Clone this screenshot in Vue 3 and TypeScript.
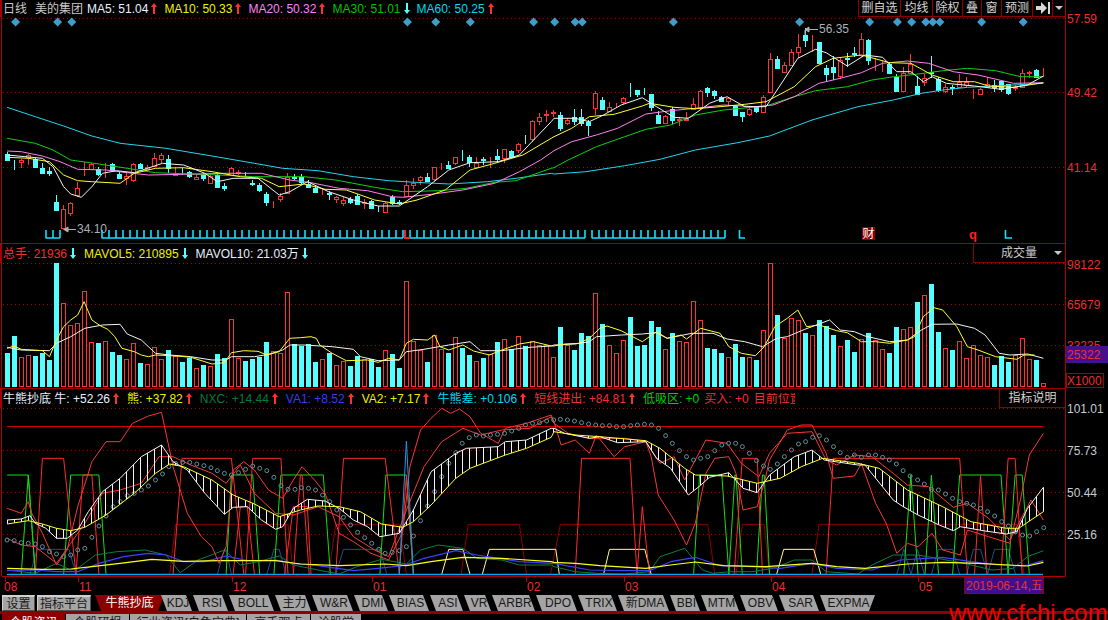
<script setup lang="ts">
type P = [number, number]
type Arrow = 'up' | 'down' | null
interface Item { text: string; cls: string; arrow: Arrow }

const SX = 2.83
const toReal = (a: P[], b: P[], yo: number): string =>
  [...a.map(([x, y]): P => [x / SX, yo + y / 3]), ...b.map(([x, y]): P => [554 + x / SX, yo + y / 3])]
    .map(([x, y]) => `${x.toFixed(1)},${y.toFixed(1)}`)
    .join(' ')
const toPts = (a: P[], b: P[], yo: number): P[] =>
  [...a.map(([x, y]): P => [x / SX, yo + y / 3]), ...b.map(([x, y]): P => [554 + x / SX, yo + y / 3])]

const interp = (pts: P[], x: number): number => {
  for (let i = 1; i < pts.length; i++) {
    if (x <= pts[i][0]) {
      const [x0, y0] = pts[i - 1]
      const [x1, y1] = pts[i]
      return y0 + ((y1 - y0) * (x - x0)) / Math.max(x1 - x0, 0.01)
    }
  }
  return pts[pts.length - 1][1]
}

/* ---------- header rows ---------- */
const mainItems: Item[] = [
  { text: 'MA5: 51.04', cls: 'c-white', arrow: 'up' },
  { text: 'MA10: 50.33', cls: 'c-yellow', arrow: 'up' },
  { text: 'MA20: 50.32', cls: 'c-pink', arrow: 'up' },
  { text: 'MA30: 51.01', cls: 'c-green', arrow: 'down' },
  { text: 'MA60: 50.25', cls: 'c-cyan', arrow: 'up' },
]
const volItems: Item[] = [
  { text: '总手: 21936', cls: 'c-red', arrow: 'down' },
  { text: 'MAVOL5: 210895', cls: 'c-yellow', arrow: 'down' },
  { text: 'MAVOL10: 21.03万', cls: 'c-white', arrow: 'down' },
]
const indItems: Item[] = [
  { text: '牛熊抄底 牛: +52.26', cls: 'c-white', arrow: 'up' },
  { text: '熊: +37.82', cls: 'c-yellow', arrow: 'up' },
  { text: 'NXC: +14.44', cls: 'c-dgreen', arrow: 'up' },
  { text: 'VA1: +8.52', cls: 'c-blue', arrow: 'up' },
  { text: 'VA2: +7.17', cls: 'c-yellow', arrow: 'up' },
  { text: '牛熊差: +0.106', cls: 'c-cyan', arrow: 'up' },
  { text: '短线进出: +84.81', cls: 'c-red', arrow: 'up' },
  { text: '低吸区: +0', cls: 'c-lime tight', arrow: null },
  { text: '买入: +0', cls: 'c-red tight', arrow: null },
]
const tools = [
  { t: '删自选', w: 42 }, { t: '均线', w: 32 }, { t: '除权', w: 30 }, { t: '叠', w: 19 },
  { t: '窗', w: 20 }, { t: '预测', w: 31 },
]

/* ---------- candles: red?, bodyTop, bodyBottom, high, low (zoom y = 3x) ---------- */
const candleRaw: number[][] = [
  [0,462,480,455,480],[0,480,481,480,510],[1,480,486,478,503],[1,466,472,462,495],[0,478,500,475,500],
  [0,503,518,490,518],[0,512,518,500,528],[0,605,630,585,630],[1,628,685,615,690],[1,608,638,605,648],
  [1,565,585,545,590],[1,497,498,485,528],[1,493,507,490,510],[0,508,522,500,528],[1,510,511,490,535],
  [0,493,510,490,514],[0,522,535,515,538],[1,527,535,520,555],[1,492,540,490,545],[0,492,505,490,505],
  [1,500,508,495,510],[1,475,498,460,500],[1,465,476,460,490],[0,478,505,465,520],[1,520,525,500,525],
  [0,510,511,505,525],[0,517,528,512,533],[1,530,537,525,540],[0,525,535,520,542],[1,528,548,525,550],
  [0,525,560,520,565],[0,557,565,550,572],[1,505,525,502,528],[1,515,520,510,525],[0,521,522,515,530],
  [0,550,551,540,558],[0,555,570,548,575],[0,582,605,575,617],[1,605,606,603,623],[1,588,597,580,605],
  [1,530,580,520,582],[0,532,533,522,540],[0,530,545,522,552],[0,553,560,540,563],[0,565,575,555,578],
  [1,570,571,565,585],[0,580,581,572,600],[1,590,596,588,608],[1,601,608,590,618],[0,596,606,590,612],
  [0,587,613,582,615],[1,607,608,598,628],[0,604,624,600,628],[0,630,631,618,636],[1,610,635,605,640],
  [0,590,610,585,615],[0,607,608,600,615],[1,556,587,540,590],[1,548,555,535,568],[1,532,540,528,555],
  [0,531,543,518,545],[1,502,538,500,542],[1,495,496,490,510],[0,495,503,482,506],[1,472,488,470,495],
  [0,468,469,450,482],[0,470,487,465,500],[1,490,500,472,505],[0,478,479,470,495],[1,477,478,470,505],
  [0,468,478,448,485],[1,448,475,447,490],[0,453,470,450,472],[1,432,450,428,460],[0,408,409,405,432],
  [1,364,418,360,425],[1,351,362,338,375],[1,343,344,330,365],[1,335,340,330,350],
  [0,345,385,335,392],[1,360,368,355,375],[0,352,362,328,375],[0,352,370,328,378],[0,365,375,360,408],
  [1,280,325,273,345],[0,300,327,292,330],[1,322,333,305,337],[1,317,318,310,325],[1,295,305,292,312],
  [0,282,283,250,292],[0,271,282,270,290],[0,275,276,265,285],[0,282,320,282,333],[0,345,370,332,372],
  [1,348,368,345,370],[0,328,360,322,372],[1,358,359,350,378],[1,358,359,335,360],[1,312,328,295,330],
  [1,273,325,270,328],[0,265,275,262,290],[0,273,285,270,298],[0,292,303,288,305],[1,294,302,290,315],
  [0,318,345,315,348],[0,337,347,335,366],[1,327,342,322,348],[0,322,332,318,340],[1,292,335,285,338],
  [1,178,275,160,278],[0,178,205,168,208],[1,195,215,185,218],[1,157,195,147,197],[1,142,155,102,175],
  [0,105,120,85,140],[1,128,129,105,155],[0,127,190,125,192],[0,205,222,195,243],[0,202,216,168,240],
  [1,180,228,175,238],[0,175,176,160,200],[0,160,161,140,170],[1,118,165,100,172],[0,120,180,118,195],
  [1,180,181,175,212],[1,185,186,182,215],[0,192,218,188,220],[0,230,273,222,275],[1,220,272,200,275],
  [1,192,218,162,222],[0,258,283,228,285],[1,235,245,222,258],[0,217,218,168,235],[0,238,270,232,275],
  [1,262,273,252,280],[0,262,263,255,285],[1,247,260,222,262],[1,245,255,232,262],[1,270,271,268,298],
  [1,267,282,265,285],[1,253,260,230,262],[0,255,260,240,275],[0,243,268,240,275],[0,253,280,252,285],
  [1,262,263,255,272],[1,218,262,208,265],[1,217,218,212,235],[0,210,232,208,235],[1,218,219,205,230],
]
const barX = (i: number) => 7 + 7 * i
const candles = candleRaw.map((c, i) => {
  const x = barX(i)
  const top = Math.round(c[1] / 3)
  const bot = Math.round(c[2] / 3)
  return {
    red: c[0] === 1,
    cx: x + 0.5,
    x: x - 2 + 0.5,
    top: top + 0.5,
    h: Math.max(bot - top, 0),
    wick: `M${x + 0.5} ${Math.round(c[3] / 3)}V${top}M${x + 0.5} ${bot}V${Math.round(c[4] / 3)}`,
  }
})

/* ---------- main moving averages ---------- */
const maLines = [
  { cls: 'l-cyan', pts: toReal(
    [[20,322],[100,350],[180,378],[260,408],[340,430],[470,445],[600,468],[720,490],[800,505],[900,512],[1000,530],[1100,542],[1160,546],[1270,552],[1380,545],[1460,535],[1560,520]],
    [[0,522],[90,515],[200,497],[300,478],[400,450],[520,428],[610,408],[730,360],[860,320],[960,300],[1040,280],[1100,270],[1170,262],[1250,258],[1385,250]], 0) },
  { cls: 'l-green', pts: toReal(
    [[20,415],[100,430],[150,450],[200,480],[280,492],[360,505],[440,518],[540,522],[620,525],[720,530],[860,530],[950,540],[1060,562],[1140,575],[1240,572],[1320,565],[1400,547],[1460,542],[1520,520],[1560,505]],
    [[0,503],[40,480],[120,440],[200,410],[260,388],[330,375],[400,345],[480,330],[600,318],[680,290],[740,272],[830,260],[900,240],[950,232],[1030,222],[1100,212],[1170,205],[1250,212],[1320,230],[1385,230]], 0) },
  { cls: 'l-pink', pts: toReal(
    [[20,453],[60,455],[120,468],[170,485],[220,508],[300,510],[360,518],[420,525],[520,523],[640,520],[740,520],[820,540],[880,548],[960,565],[1040,572],[1110,590],[1140,592],[1220,583],[1310,570],[1400,550],[1470,515],[1530,480]],
    [[0,452],[50,425],[120,405],[180,385],[260,342],[330,332],[400,325],[480,315],[570,320],[620,315],[680,290],[750,250],[810,235],[870,218],[930,190],[1000,183],[1060,190],[1130,215],[1200,225],[1300,250],[1385,248]], 0) },
  { cls: 'l-yellow', pts: toReal(
    [[20,472],[80,475],[140,485],[180,525],[220,542],[260,545],[340,550],[380,520],[440,505],[520,503],[600,515],[680,530],[740,535],[790,560],[860,552],[920,568],[980,570],[1060,600],[1130,612],[1180,600],[1260,570],[1330,510],[1400,490],[1480,465],[1560,415]],
    [[0,410],[50,385],[100,350],[170,343],[250,318],[270,310],[340,322],[400,326],[470,320],[540,313],[600,305],[680,260],[740,200],[790,175],[870,165],[950,188],[1010,190],[1070,225],[1130,245],[1190,245],[1230,258],[1300,262],[1385,248]], 0) },
  { cls: 'l-white', pts: toReal(
    [[20,465],[120,475],[150,500],[180,560],[200,582],[230,592],[260,560],[290,520],[330,512],[380,518],[460,490],[520,495],[580,520],[615,545],[660,535],[730,535],[790,585],[820,575],[870,545],[930,575],[1000,600],[1070,618],[1130,618],[1210,560],[1270,510],[1330,488],[1410,485],[1470,465],[1510,420],[1560,365]],
    [[0,355],[60,355],[100,365],[140,345],[190,315],[250,293],[290,320],[340,352],[380,355],[440,310],[490,290],[540,320],[600,320],[650,240],[690,175],[740,148],[770,158],[830,198],[880,165],[930,172],[970,215],[1010,215],[1045,245],[1070,230],[1110,250],[1190,258],[1265,268],[1340,255],[1385,228]], 0) },
]

const diamondXs = [44,163,203,1153,1233,1331,1510].map(x => x / SX)
  .concat([2,60,80,338,695,893,972,1012,1052,1072,1092,1210,1328].map(x => 554 + x / SX))
const diamonds = diamondXs.map(x => `${x},17.5 ${x + 4.5},22 ${x},26.5 ${x - 4.5},22`)

const combRange = (a: number, b: number) => {
  let d = `M${a - 0.5} 238H${b}`
  for (let x = a; x <= b; x += 7) d += `M${x} 238V230`
  return d
}
const combPath = combRange(46, 60) + combRange(102, 403) + combRange(410, 585) + combRange(592, 725)
  + 'M739.5 230V238H745M1005.5 230V238H1012'

/* ---------- volume ---------- */
const volRaw: number[][] = [
  [0,340],[0,288],[1,352],[1,346],[0,348],[0,338],[0,360],[0,70],[1,190],[1,256],[1,250],[1,154],[1,307],[0,309],[1,303],[0,336],[0,345],[1,358],[1,310],[0,369],
  [1,373],[1,322],[1,358],[0,330],[1,349],[0,366],[0,353],[1,385],[0,375],[1,378],[0,342],[0,355],[1,238],[1,353],[0,363],[0,357],[0,350],[0,306],[1,334],[1,338],
  [1,157],[0,312],[0,319],[0,312],[0,366],[1,358],[0,338],[1,375],[1,364],[0,378],[0,348],[1,357],[0,358],[0,380],[1,330],[0,342],[0,384],[1,124],[1,303],[1,331],
  [0,366],[1,285],[1,327],[0,339],[1,292],[0,324],[0,345],[1,364],[0,354],[1,342],[0,306],[1,298],[0,328],[1,288],[0,318],[1,304],[1,315],[1,316],[1,352],
  [0,261],[1,314],[0,330],[0,279],[0,288],[1,160],[0,252],[1,316],[1,340],[1,300],[0,231],[0,318],[0,315],[0,243],[0,261],[1,328],[0,279],[1,303],[1,306],[1,184],
  [1,241],[0,324],[0,327],[0,339],[1,351],[0,312],[0,351],[1,352],[0,360],[1,270],[1,70],[0,225],[1,295],[1,235],[1,241],[0,279],[1,286],[0,240],[0,258],[0,285],
  [1,318],[0,300],[0,336],[1,298],[0,279],[1,300],[1,328],[0,339],[0,261],[1,267],[1,261],[0,186],[1,165],[0,132],[0,276],[1,324],[0,330],[1,304],[1,354],[1,316],
  [1,346],[1,351],[0,375],[0,348],[0,366],[1,346],[1,295],[1,357],[0,360],[1,430],
]
const vols = volRaw.map((v, i) => {
  const top = 240 + Math.round(v[1] / 3)
  return { red: v[0] === 1, x: barX(i) - 2 + 0.5, y: top + 0.5, h: 387 - top - 1 }
})
const volYellow = toReal(
  [[20,325],[40,318],[60,328],[120,332],[140,350],[160,300],[180,260],[200,240],[220,225],[238,185],[260,240],[285,258],[305,268],[325,290],[345,325],[380,335],[400,345],[420,350],[440,345],[500,348],[540,352],[600,372],[635,368],[655,338],[690,332],[730,334],[755,345],[790,335],[820,295],[850,293],[880,290],[895,295],[905,315],[940,340],[980,362],[1040,360],[1070,367],[1100,355],[1130,360],[1150,310],[1170,298],[1210,300],[1230,285],[1245,320],[1270,330],[1310,315],[1340,333],[1385,345],[1420,330],[1470,312],[1510,305],[1560,318]],
  [[0,318],[30,312],[70,310],[100,295],[130,265],[150,258],[190,272],[250,305],[290,275],[320,295],[360,285],[375,297],[415,265],[470,280],[495,320],[530,340],[570,347],[595,320],[625,260],[660,235],[690,210],[715,260],[750,255],[800,272],[830,278],[870,305],[910,305],[950,310],[1000,300],[1020,290],[1045,230],[1075,203],[1100,210],[1140,260],[1170,320],[1200,330],[1250,350],[1310,358],[1330,345],[1360,345]], 240)
const volWhite = toReal(
  [[20,322],[60,330],[140,332],[160,310],[200,290],[240,265],[290,255],[340,253],[360,282],[400,300],[440,340],[480,345],[540,350],[600,360],[640,360],[655,350],[720,350],[760,343],[800,330],[820,315],[860,315],[940,320],[1000,328],[1020,350],[1070,362],[1130,360],[1150,335],[1200,328],[1270,315],[1330,305],[1360,332],[1420,332],[1500,322],[1560,318]],
  [[0,315],[60,312],[100,305],[120,290],[190,285],[250,282],[290,278],[320,295],[390,280],[450,280],[490,297],[540,305],[590,320],[630,295],[660,290],[710,268],[780,240],[810,270],[850,275],[880,288],[950,305],[1000,300],[1040,270],[1070,253],[1140,252],[1190,265],[1220,285],[1260,340],[1290,345],[1340,342],[1385,355]], 240)

/* ---------- indicator ---------- */
const Y0 = 400
const bandWhite = toPts(
  [[20,360],[60,357],[85,347],[100,370],[130,385],[160,415],[190,415],[220,390],[250,335],[290,275],[340,235],[400,170],[457,135],[490,185],[530,210],[580,280],[635,343],[660,322],[700,320],[740,360],[780,388],[800,380],[830,325],[870,298],[920,303],[960,325],[1000,360],[1040,380],[1075,410],[1130,400],[1170,330],[1220,215],[1290,160],[1320,145],[1410,140],[1430,125],[1490,120],[1560,85]],
  [[0,85],[30,100],[100,115],[130,110],[180,128],[260,125],[290,175],[330,205],[380,285],[410,260],[440,232],[495,218],[535,265],[575,278],[610,225],[680,170],[730,150],[765,180],[860,195],[880,195],[960,300],[985,318],[1030,345],[1090,375],[1130,392],[1150,380],[1220,393],[1280,402],[1310,395],[1340,325],[1385,262]], Y0)
const bandYellow = toPts(
  [[20,372],[80,362],[120,372],[160,385],[200,392],[240,382],[300,345],[380,280],[440,220],[480,192],[520,200],[600,240],[660,285],[720,312],[790,350],[850,330],[900,318],[960,320],[1020,335],[1080,372],[1140,382],[1170,365],[1220,315],[1290,235],[1330,205],[1430,165],[1490,145],[1560,112]],
  [[0,95],[60,105],[130,110],[260,122],[300,145],[370,205],[400,225],[490,228],[575,250],[640,235],[700,200],[760,175],[860,190],[920,205],[1000,270],[1100,320],[1180,365],[1280,385],[1315,385],[1385,335]], Y0)
const fmt = (p: P[]) => p.map(([x, y]) => `${x.toFixed(1)},${y.toFixed(1)}`).join(' ')
const bandW = fmt(bandWhite)
const bandY = fmt(bandYellow)
let hatchD = ''
for (let i = 0; i < candleRaw.length; i++) {
  const x = barX(i) + 0.5
  hatchD += `M${x} ${interp(bandWhite, x).toFixed(1)}V${interp(bandYellow, x).toFixed(1)}`
}

const dots: P[] = toPts(
  [[20,420],[40,422],[60,428],[80,430],[100,432],[120,440],[140,455],[160,462],[180,470],[200,465],[220,450],[240,445],[260,412],[280,378],[300,348],[320,320],[340,305],[360,287],[380,280],[400,270],[420,258],[440,240],[460,222],[478,200],[497,190],[517,187],[537,187],[557,192],[577,197],[597,203],[615,212],[635,220],[655,225],[675,218],[695,208],[715,198],[735,205],[755,212],[775,232],[795,257],[815,268],[835,268],[853,263],[873,265],[893,270],[913,285],[933,305],[953,330],[972,352],[992,375],[1012,397],[1032,413],[1052,430],[1072,448],[1090,460],[1110,457],[1130,452],[1150,440],[1170,408],[1190,362],[1210,318],[1230,275],[1250,230],[1270,190],[1290,158],[1308,130],[1328,113],[1348,105],[1368,108],[1388,105],[1408,103],[1428,100],[1448,93],[1468,85],[1487,75],[1507,70],[1527,68],[1547,63],[1567,60]],
  [[18,58],[38,60],[58,63],[78,68],[98,72],[118,75],[137,77],[157,77],[177,80],[197,80],[217,77],[236,75],[256,73],[276,75],[296,85],[316,107],[335,130],[355,152],[375,170],[395,180],[415,175],[435,170],[455,152],[475,135],[494,130],[514,130],[533,140],[553,160],[573,182],[593,198],[612,208],[632,192],[652,170],[672,150],[692,132],[712,125],[732,112],[751,107],[771,120],[791,140],[810,158],[830,172],[850,165],[870,172],[890,165],[910,165],[930,172],[949,180],[969,192],[988,212],[1008,228],[1029,240],[1048,252],[1068,268],[1088,270],[1108,282],[1128,295],[1148,305],[1168,310],[1187,315],[1207,325],[1227,335],[1247,348],[1267,365],[1286,378],[1306,395],[1326,405],[1346,408],[1366,395],[1386,383]], Y0)

const redA = toReal(
  [[20,325],[60,340],[80,305],[90,340],[120,400],[160,495],[190,450],[220,320],[260,185],[300,125],[340,125],[375,70],[420,48],[457,37],[490,200],[530,340],[570,410],[600,440],[620,490],[640,440],[660,210],[690,185],[720,210],[760,270],[800,295],[830,240],[855,200],[890,240],[920,280],[960,400],[1000,425],[1050,460],[1100,480],[1140,395],[1160,200],[1190,90],[1220,55],[1250,25],[1275,40],[1300,27],[1330,50],[1360,100],[1410,130],[1430,85],[1490,70],[1560,45]],
  [[0,65],[20,135],[60,120],[100,160],[120,105],[170,170],[200,140],[260,125],[275,170],[295,285],[340,360],[375,435],[400,370],[430,220],[455,175],[495,170],[515,220],[535,330],[575,320],[595,250],[610,180],[660,90],[700,75],[730,75],[770,160],[790,235],[850,228],[870,190],[910,310],[940,370],[970,460],[1000,430],[1030,440],[1070,400],[1100,450],[1150,465],[1170,390],[1230,410],[1290,430],[1320,300],[1345,165],[1385,100]], Y0)
const redB = toReal(
  [[20,415],[60,435],[100,440],[160,490],[200,430],[240,370],[290,280],[340,270],[400,250],[450,170],[490,170],[540,195],[600,220],[640,250],[680,195],[720,280],[780,340],[830,345],[900,320],[960,350],[1000,410],[1060,450],[1100,470],[1150,330],[1200,200],[1250,125],[1310,85],[1360,105],[1420,90],[1500,85],[1560,50]],
  [[0,70],[40,100],[100,115],[200,115],[260,125],[300,190],[340,170],[370,240],[400,180],[430,120],[490,130],[530,190],[580,230],[610,160],[660,100],[730,95],[770,180],[800,195],[850,165],[900,170],[960,220],[1000,255],[1060,260],[1130,322],[1170,310],[1230,355],[1290,420],[1320,360],[1350,300],[1385,360]], Y0)
const nxcLine = toReal(
  [[20,510],[60,515],[100,520],[160,490],[200,510],[220,505],[270,465],[330,455],[410,450],[470,465],[510,518],[560,480],[635,450],[680,495],[730,485],[790,468],[830,495],[900,510],[960,522],[1010,500],[1080,478],[1150,492],[1190,450],[1240,435],[1310,445],[1350,475],[1420,480],[1470,495],[1560,495]],
  [[0,500],[60,515],[120,520],[200,522],[270,515],[300,470],[370,445],[420,510],[450,520],[500,515],[560,515],[620,505],[680,480],[730,480],[770,515],[860,522],[900,495],[960,465],[1030,465],[1100,478],[1160,490],[1240,510],[1300,505],[1340,470],[1385,452]], Y0)
const va1Line = toReal(
  [[20,512],[100,510],[160,515],[220,515],[280,490],[350,470],[420,460],[470,465],[520,485],[580,485],[640,468],[700,482],[780,480],[830,490],[900,497],[1000,512],[1070,505],[1140,497],[1200,475],[1290,452],[1350,465],[1470,485],[1560,490]],
  [[0,490],[100,510],[200,512],[270,512],[330,485],[400,472],[470,497],[560,500],[640,505],[730,490],[800,505],[900,510],[980,480],[1100,472],[1180,485],[1260,495],[1330,498],[1385,482]], Y0)
const va2Line = toReal(
  [[20,505],[120,508],[200,507],[260,500],[340,490],[430,478],[520,484],[620,482],[780,482],[850,492],[960,497],[1090,492],[1150,497],[1220,485],[1310,472],[1420,475],[1560,485]],
  [[0,487],[60,490],[130,497],[260,505],[330,495],[400,486],[480,497],[600,500],[730,490],[800,500],[880,505],[1000,492],[1100,487],[1200,490],[1340,498],[1385,487]], Y0)

type Pulse = [number, number, number, number]
const pulses = (left: Pulse[], right: Pulse[], level: number): string => {
  const base = Y0 + 523 / 3
  const y = Y0 + level / 3
  const seg = (p: Pulse, off: number) =>
    `M${(off + p[0] / SX).toFixed(1)} ${base}L${(off + p[1] / SX).toFixed(1)} ${y}L${(off + p[2] / SX).toFixed(1)} ${y}L${(off + p[3] / SX).toFixed(1)} ${base}`
  return left.map(p => seg(p, 0)).join('') + right.map(p => seg(p, 554)).join('')
}
const pulseSets = [
  { cls: 'p-dred', d: pulses([[480,497,815,830],[930,950,1130,1150],[1305,1325,1470,1490]], [[-10,18,435,455],[515,533,595,610],[730,750,1310,1330]], 373) },
  { cls: 'p-dblue', d: pulses([[85,105,195,215],[615,635,640,655],[755,775,790,810],[950,972,1075,1095]], [[970,990,990,1010],[1010,1029,1029,1048],[1068,1088,1128,1148],[1168,1187,1207,1227],[1227,1247,1286,1306]], 448) },
  { cls: 'p-pale', d: pulses([[1250,1270,1310,1330]], [[-203,-183,5,15],[140,157,257,275],[630,650,735,755]], 448) },
  { cls: 'p-lime', d: pulses([[60,80,80,100],[180,200,280,300],[640,655,715,735],[775,795,915,935],[1075,1092,1150,1170]], [[395,412,475,495],[495,512,515,533],[573,590,595,610],[990,1010,1010,1030],[1050,1068,1068,1088],[1128,1148,1265,1285],[1285,1305,1325,1345]], 225) },
  { cls: 'p-red', d: pulses([[100,120,180,215],[490,515,655,690],[695,715,795,815],[950,972,1090,1130]], [[60,78,215,235],[510,533,575,590],[770,790,1148,1170],[1265,1285,1305,1325]], 175) },
  { cls: 'p-red', d: pulses([[215,235,260,280],[830,850,855,875],[1130,1150,1150,1170]], [[1190,1207,1207,1225]], 225) },
  { cls: 'p-red', d: pulses([[660,680,700,720],[805,830,870,880]], [[235,250,250,270]], 320) },
]
const blueSpike = pulses([[1130,1150,1150,1170]], [], 123)
const lgreen = `20,225 80,225 100,523`.split(' ').map(s => {
  const [x, y] = s.split(',').map(Number)
  return `${(x / SX).toFixed(1)},${(Y0 + y / 3).toFixed(1)}`
}).join(' ')

const dateTicks = [
  { t: '08', tick: 5, x: 4 }, { t: '11', tick: 78, x: 79 }, { t: '12', tick: 232, x: 233 }, { t: '01', tick: 372, x: 373 },
  { t: '02', tick: 526, x: 527 }, { t: '03', tick: 624, x: 625 }, { t: '04', tick: 771, x: 772 }, { t: '05', tick: 918, x: 919 },
]

/* ---------- tabs ---------- */
const tabs = [
  { t: 'KDJ', w: 32 }, { t: 'RSI', w: 36 }, { t: 'BOLL', w: 46 }, { t: '主力', w: 37 }, { t: 'W&R', w: 42 }, { t: 'DMI', w: 35 },
  { t: 'BIAS', w: 41 }, { t: 'ASI', w: 34 }, { t: 'VR', w: 28 }, { t: 'ARBR', w: 44 }, { t: 'DPO', w: 42 }, { t: 'TRIX', w: 40 },
  { t: '新DMA', w: 52 }, { t: 'BBI', w: 31 }, { t: 'MTM', w: 39 }, { t: 'OBV', w: 39 }, { t: 'SAR', w: 41 }, { t: 'EXPMA', w: 55 },
]
const subTabs = [
  { t: '个股资讯', w: 63, on: true }, { t: '个股研报', w: 63, on: false }, { t: '行业资讯[自免宝典]', w: 116, on: false },
  { t: '高手观点', w: 63, on: false }, { t: '论股堂', w: 50, on: false },
]
</script>

<template>
  <div class="screen">
    <!-- K-line pane -->
    <section class="pane pane-main">
      <header class="head head-main">
        <span class="c-gray title">日线</span>
        <span class="c-gray name">美的集团</span>
        <span v-for="it in mainItems" :key="it.text" class="item item-main" :class="it.cls">
          {{ it.text }}
          <svg v-if="it.arrow" class="arrow" :class="it.arrow" viewBox="0 0 6 11" width="6" height="11">
            <path v-if="it.arrow === 'up'" d="M3 0L6 4H4V11H2V4H0Z" />
            <path v-else d="M3 11L6 7H4V0H2V7H0Z" />
          </svg>
        </span>
        <nav class="tools">
          <span v-for="b in tools" :key="b.t" class="tool" :style="{ width: b.w + 'px' }">{{ b.t }}</span>
          <span class="tool tool-next">
            <svg viewBox="0 0 14 12" width="14" height="12"><path d="M0 4H5V0L11 6L5 12V8H0Z" fill="#d8d8d8" /><path d="M12 0H14V12H12Z" fill="#d8d8d8" /></svg>
          </span>
          <span class="tool tool-drop"><i class="caret" /></span>
        </nav>
      </header>
      <svg class="plot" width="1108" height="226" viewBox="0 17 1108 226">
        <path d="M3 18.5H1065M3 92.5H1065M3 167.5H1065" class="grid" />
        <path d="M1.5 17V243M1065.5 17V243" class="frame" />
        <polygon v-for="(d, i) in diamonds" :key="i" :points="d" class="diamond" />
        <g shape-rendering="crispEdges">
          <path v-for="(c, i) in candles" :key="i" :d="c.wick" :class="c.red ? 'k-red' : 'k-cyan'" />
          <rect v-for="(c, i) in candles" :key="'b' + i" :x="c.x" :y="c.top" width="4" :height="c.h"
            :class="c.red ? 'body-red' : 'body-cyan'" />
        </g>
        <polyline v-for="l in maLines" :key="l.cls" :points="l.pts" :class="l.cls" />
        <g class="note">
          <path d="M64 229.5H76M64 229.5L68 227V232Z" />
          <text x="77" y="233">34.10</text>
          <path d="M805 29.5H818M805 29.5L809 27V32ZM805 30V35" />
          <text x="819" y="33">56.35</text>
        </g>
        <path :d="combPath" class="comb" />
        <path d="M405 230V238H410" class="red-l" />
        <rect x="862" y="227" width="13" height="13" class="cai-box" />
        <text x="862.5" y="238" class="cai">财</text>
        <text x="969" y="239" class="q">q</text>
        <g class="axis-red">
          <text x="1067" y="23">57.59</text>
          <text x="1067" y="97">49.42</text>
          <text x="1067" y="172">41.14</text>
        </g>
      </svg>
    </section>

    <!-- Volume pane -->
    <section class="pane pane-vol">
      <header class="head head-vol">
        <span v-for="it in volItems" :key="it.text" class="item item-vol" :class="it.cls">
          {{ it.text }}
          <svg v-if="it.arrow" class="arrow" :class="it.arrow" viewBox="0 0 6 11" width="6" height="11">
            <path d="M3 11L6 7H4V0H2V7H0Z" />
          </svg>
        </span>
        <div class="vol-select"><span>成交量</span><i class="caret" /></div>
      </header>
      <svg class="plot" width="1108" height="125" viewBox="0 263 1108 125">
        <path d="M3 263.5H1065M3 304.5H1065M3 345.5H1065" class="grid" />
        <path d="M1.5 263V388M1065.5 263V388" class="frame" />
        <g shape-rendering="crispEdges">
          <rect v-for="(v, i) in vols" :key="i" :x="v.x" :y="v.y" width="4" :height="v.h"
            :class="v.red ? 'body-red' : 'body-cyan'" />
        </g>
        <polyline :points="volWhite" class="l-white" />
        <polyline :points="volYellow" class="l-yellow" />
        <g class="axis-red">
          <text x="1067" y="269">98122</text>
          <text x="1067" y="309">65679</text>
          <text x="1067" y="350">33235</text>
        </g>
        <rect x="1066" y="346" width="42" height="17" class="tag" />
        <text x="1067" y="359" class="axis-red">25322</text>
        <rect x="1066.5" y="373.5" width="37" height="14" class="x-box" />
        <text x="1067" y="385" class="axis-red">X1000</text>
      </svg>
    </section>

    <!-- Indicator pane -->
    <section class="pane pane-ind">
      <header class="head head-ind">
        <span v-for="it in indItems" :key="it.text" class="item item-ind" :class="it.cls">
          {{ it.text }}
          <svg v-if="it.arrow" class="arrow up" viewBox="0 0 6 11" width="6" height="11">
            <path d="M3 0L6 4H4V11H2V4H0Z" />
          </svg>
        </span>
        <span class="clip c-red">目前位置</span>
        <div class="explain">指标说明</div>
      </header>
      <svg class="plot" width="1108" height="187" viewBox="0 408 1108 187">
        <path d="M3 408.5H1065M3 450.5H1065M3 492.5H1065M3 534.5H1065" class="grid" />
        <path d="M1.5 408V576M1065.5 408V576M2 576.5H1065.5" class="frame" />
        <path d="M7 426.5H1043" class="solid-red" />
        <path v-for="(p, i) in pulseSets" :key="i" :d="p.d" :class="p.cls" />
        <polyline :points="lgreen" class="p-lime" />
        <polyline :points="nxcLine" class="l-nxc" />
        <polyline :points="va1Line" class="l-va1" />
        <polyline :points="va2Line" class="l-va2" />
        <polyline :points="redA" class="l-red" />
        <polyline :points="redB" class="l-red" />
        <path :d="blueSpike" class="p-blue" />
        <path d="M7 574.5H1043" class="base" />
        <circle v-for="(p, i) in dots" :key="i" :cx="p[0]" :cy="p[1]" r="2" class="dot" />
        <path :d="hatchD" class="hatch" />
        <polyline :points="bandW" class="l-white" />
        <polyline :points="bandY" class="l-yellow" />
        <g class="axis-gray">
          <text x="1067" y="413">101.01</text>
          <text x="1067" y="455">75.73</text>
          <text x="1067" y="497">50.44</text>
          <text x="1067" y="539">25.16</text>
        </g>
        <g v-for="d in dateTicks" :key="d.t">
          <path :d="`M${d.tick + 0.5} 576V582`" class="frame" />
          <text :x="d.x" y="591" class="date">{{ d.t }}</text>
        </g>
        <rect x="964.5" y="577.5" width="79" height="16" class="date-box" />
        <text x="966" y="590" class="date">2019-06-14,五</text>
      </svg>
    </section>

    <!-- Tabs -->
    <div class="tabs">
      <span class="btn btn-set">设置</span>
      <span class="btn btn-plat">指标平台</span>
      <span class="tab-on">牛熊抄底</span>
      <span v-for="(t, i) in tabs" :key="t.t" class="tab" :class="{ last: i === tabs.length - 1 }"
        :style="{ width: t.w + 'px' }">{{ t.t }}</span>
    </div>
    <div class="sub">
      <span v-for="s in subTabs" :key="s.t" class="sub-tab" :class="{ on: s.on }" :style="{ width: s.w + 'px' }">{{ s.t }}</span>
    </div>
    <div class="mark">www.cfchi.com</div>
  </div>
</template>

<style>
html, body { margin: 0; background: #000; }
</style>

<style scoped>
.screen {
  position: relative;
  width: 1108px;
  height: 620px;
  overflow: hidden;
  background: #000;
  display: flex;
  flex-direction: column;
  font-family: "Liberation Sans", "Noto Sans CJK SC", sans-serif;
  font-size: 12px;
  line-height: 1;
}
.pane { width: 1108px; display: flex; flex-direction: column; }
.plot { display: block; flex: none; overflow: visible; }
.head {
  box-sizing: border-box;
  position: relative;
  width: 1066px;
  display: flex;
  align-items: center;
  border-left: 2px solid #a80000;
  border-right: 1px solid #b00000;
  white-space: nowrap;
}
.head-main { height: 17px; padding-left: 1px; }
.head-vol { height: 20px; padding-left: 1px; border-top: 1px solid #a00000; }
.head-ind { height: 20px; padding-left: 1px; border-top: 1px solid #a00000; }
.title { width: 32px; }
.name { width: 52px; }
.item { display: inline-flex; align-items: center; gap: 3px; }
.item-main { margin-right: 7px; }
.item-vol { margin-right: 8px; }
.item-ind { margin-right: 8px; }
.item-ind.tight { margin-right: 5px; }
.arrow.up { fill: #ff3030; }
.arrow.down { fill: #55ffff; }
.c-white { color: #e8f0ff; }
.c-gray { color: #c8c8c8; }
.c-yellow { color: #f0f000; }
.c-pink { color: #ff80ff; }
.c-green { color: #00c000; }
.c-cyan { color: #00d8f0; }
.c-red { color: #f03030; }
.c-dgreen { color: #0a7a3a; }
.c-blue { color: #3c3cf0; }
.c-lime { color: #00d000; }
.clip { width: 41px; overflow: hidden; }

.tools { position: absolute; right: 0; top: 0; height: 17px; display: flex; }
.tool {
  box-sizing: border-box;
  height: 17px;
  display: flex;
  align-items: center;
  justify-content: center;
  color: #d4d4d4;
  border-left: 1px solid #8c0000;
  border-bottom: 1px solid #8c0000;
  font-size: 12px;
}
.tool-next { width: 20px; }
.tool-drop { width: 13px; }
.caret {
  display: block;
  width: 0;
  height: 0;
  border-left: 4px solid transparent;
  border-right: 4px solid transparent;
  border-top: 4px solid #c8c8c8;
}
.vol-select {
  position: absolute;
  right: 0;
  top: 0;
  box-sizing: border-box;
  width: 92px;
  height: 19px;
  display: flex;
  align-items: center;
  justify-content: flex-end;
  gap: 17px;
  padding-right: 3px;
  color: #c8c8c8;
  border-left: 1px solid #8c0000;
  border-bottom: 1px solid #8c0000;
}
.explain {
  position: absolute;
  right: 0;
  top: 0;
  box-sizing: border-box;
  width: 66px;
  height: 19px;
  display: flex;
  align-items: center;
  justify-content: center;
  color: #d4d4d4;
  border-left: 1px solid #8c0000;
  border-bottom: 1px solid #8c0000;
}

/* svg */
.grid { stroke: #a00000; stroke-width: 1; stroke-dasharray: 1 3; fill: none; }
.frame { stroke: #b00000; stroke-width: 1; fill: none; }
.diamond { fill: #3d9fc8; }
.k-red { stroke: #ff3232; fill: none; }
.k-cyan { stroke: #55ffff; fill: none; }
.body-red { fill: #000; stroke: #ff3232; }
.body-cyan { fill: #55ffff; stroke: #55ffff; }
polyline { fill: none; stroke-linejoin: round; }
.l-cyan { stroke: #22d8ee; stroke-width: 1; }
.l-green { stroke: #10d010; stroke-width: 1; }
.l-pink { stroke: #ff80f0; stroke-width: 1; }
.l-yellow { stroke: #ffff30; stroke-width: 1; }
.l-white { stroke: #f4f4f4; stroke-width: 1; }
.note path { stroke: #b0b0b0; fill: #b0b0b0; stroke-width: 1; }
.note text { fill: #a8b0b8; font-size: 12px; }
.comb { stroke: #10e0ff; fill: none; stroke-width: 1.6; }
.red-l { stroke: #ff2020; fill: none; stroke-width: 2; }
.cai-box { fill: #8c0000; }
.cai { fill: #fff; font-size: 12px; }
.q { fill: #ff2020; font-size: 13px; font-weight: bold; }
.axis-red text, text.axis-red { fill: #e83030; font-size: 12px; }
.axis-gray text { fill: #c4ccd4; font-size: 12px; }
.tag { fill: #45108c; }
.x-box { fill: #000; stroke: #a00000; }
.solid-red { stroke: #d00000; fill: none; stroke-width: 1; }
.base { stroke: #10a0f0; fill: none; stroke-width: 1.4; }
.dot { fill: none; stroke: #5f929c; stroke-width: 1; }
.hatch { stroke: #f4f4f4; stroke-width: 1; fill: none; }
.l-red { stroke: #f83838; stroke-width: 1; }
.l-nxc { stroke: #0a8040; stroke-width: 1; }
.l-va1 { stroke: #4040ff; stroke-width: 1.2; }
.l-va2 { stroke: #ffff20; stroke-width: 1.2; }
.p-red, .p-lime, .p-dred, .p-dblue, .p-pale, .p-blue { fill: none; stroke-width: 1; }
.p-red { stroke: #ff2a2a; }
.p-lime { stroke: #10e010; }
.p-dred { stroke: #900000; }
.p-dblue { stroke: #1c4e8c; }
.p-pale { stroke: #ffff90; }
.p-blue { stroke: #10a0f0; }
.date { fill: #e83030; font-size: 12px; }
.date-box { fill: #40108c; stroke: #900000; }

/* tabs */
.tabs {
  flex: none;
  height: 16px;
  display: flex;
  align-items: stretch;
  padding-left: 2px;
  box-sizing: border-box;
}
.btn {
  box-sizing: border-box;
  display: flex;
  align-items: center;
  justify-content: center;
  background: #a4a4a4;
  color: #181818;
  border-top: 2px solid #d0d0d0;
  border-left: 1px solid #d0d0d0;
  border-bottom: 1px solid #505050;
  border-right: 1px solid #505050;
}
.btn-set { width: 33px; }
.btn-plat { width: 54px; margin-left: 2px; margin-right: 4px; }
.tab-on {
  width: 69px;
  margin-right: -3px;
  display: flex;
  align-items: center;
  justify-content: center;
  background: #8c0000;
  color: #fff;
  clip-path: polygon(0 0, 100% 0, calc(100% - 6px) 100%, 6px 100%);
}
.tab {
  flex: none;
  display: flex;
  align-items: center;
  justify-content: center;
  background: #a4a4a4;
  color: #181818;
  margin-right: 0;
  padding-left: 2px;
  box-sizing: border-box;
  clip-path: polygon(0 0, calc(100% - 7px) 0, calc(100% - 1px) 100%, 6px 100%);
}
.tab.last { clip-path: polygon(0 0, 100% 0, calc(100% - 6px) 100%, 6px 100%); }
.sub {
  flex: none;
  height: 9px;
  box-sizing: border-box;
  border-top: 3px solid #8c0000;
  display: flex;
  gap: 1px;
  padding-left: 2px;
  overflow: hidden;
  align-items: flex-start;
}
.sub-tab {
  flex: none;
  height: 17px;
  display: flex;
  align-items: center;
  justify-content: center;
  background: #a4a4a4;
  color: #181818;
}
.sub-tab.on { background: #8c0000; color: #fff; }
.mark {
  position: absolute;
  left: 949px;
  top: 599px;
  color: #f40000;
  font-size: 24px;
  line-height: 27px;
  white-space: nowrap;
}
</style>
